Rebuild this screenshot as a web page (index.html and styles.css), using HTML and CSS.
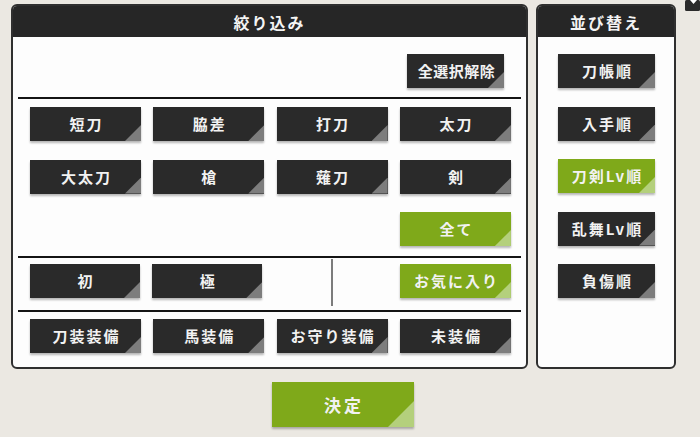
FILE: index.html
```html
<!DOCTYPE html>
<html lang="ja">
<head>
<meta charset="utf-8">
<link rel="stylesheet" href="styles.css">
</head>
<body>
<div class="corner-icon">
  <svg width="15" height="11" viewBox="0 0 15 11"><rect x="0" y="0" width="15" height="11" rx="1.5" fill="#2a2a2a"/><polygon points="5,0 12,0 8.5,4" fill="#ffffff"/></svg>
</div>
<div class="main">
  <section class="panel filter">
    <div class="panel-head">絞り込み</div>
    <div class="sec sec-a">
      <div class="btn btn-narrow tight">全選択解除</div>
    </div>
    <div class="divider"></div>
    <div class="sec sec-b grid">
      <div class="btn">短刀</div>
      <div class="btn">脇差</div>
      <div class="btn">打刀</div>
      <div class="btn">太刀</div>
      <div class="btn">大太刀</div>
      <div class="btn">槍</div>
      <div class="btn">薙刀</div>
      <div class="btn">剣</div>
      <div class="btn green col4">全て</div>
    </div>
    <div class="divider"></div>
    <div class="sec sec-c grid">
      <div class="btn w110 push">初</div>
      <div class="btn w110 push">極</div>
      <div class="vline-cell"><div class="vline"></div></div>
      <div class="btn green push">お気に入り</div>
    </div>
    <div class="divider"></div>
    <div class="sec sec-d grid">
      <div class="btn">刀装装備</div>
      <div class="btn">馬装備</div>
      <div class="btn">お守り装備</div>
      <div class="btn">未装備</div>
    </div>
  </section>
  <section class="panel sort">
    <div class="panel-head">並び替え</div>
    <div class="sort-list">
      <div class="btn btn-narrow">刀帳順</div>
      <div class="btn btn-narrow">入手順</div>
      <div class="btn btn-narrow green">刀剣Lv順</div>
      <div class="btn btn-narrow">乱舞Lv順</div>
      <div class="btn btn-narrow">負傷順</div>
    </div>
  </section>
</div>
<div class="footer">
  <div class="btn green decide">決定</div>
</div>
</body>
</html>
```

FILE: styles.css
```css
* { box-sizing: border-box; }
html, body { margin: 0; padding: 0; }
body {
  width: 700px;
  height: 437px;
  overflow: hidden;
  background: #ebe8e2;
  font-family: "Noto Sans CJK JP", "Noto Sans", sans-serif;
  position: relative;
}
.corner-icon {
  position: absolute;
  top: 0;
  left: 685px;
  line-height: 0;
}
.main {
  display: flex;
  gap: 8px;
  padding: 4px 0 0 11px;
}
.panel {
  background: #fdfdfd;
  border: 2px solid #2f2f2f;
  border-radius: 6px;
  overflow: hidden;
  height: 365px;
}
.filter { width: 517px; }
.sort { width: 140px; }
.panel-head {
  background: #262626;
  color: #f4f4f4;
  text-align: center;
  font-size: 16px;
  font-weight: 700;
  letter-spacing: 2px;
  margin-top: -2px;
  padding-top: 4px;
  height: 33px;
  line-height: 29px;
}
.sec { padding-left: 17px; padding-right: 15px; }
.sec-a {
  display: flex;
  justify-content: flex-end;
  padding: 17px 22px 9px 0;
  height: 60px;
}
.divider {
  height: 2px;
  background: #141414;
  margin: 0 5px;
}
.grid {
  display: grid;
  grid-template-columns: repeat(4, 111px);
  column-gap: 12.3px;
  align-items: start;
}
.sec-b {
  padding-top: 8px;
  padding-bottom: 10px;
  row-gap: 18.5px;
  height: 157px;
}
.col4 { grid-column: 4; }
.sec-c {
  padding-top: 1px;
  padding-bottom: 4px;
  height: 52px;
}
.push { margin-top: 5px; }
.w110 { width: 110px; }
.sec-c .w110:nth-child(2) { margin-left: -1px; }
.vline-cell {
  display: flex;
  justify-content: center;
}
.vline {
  width: 2px;
  height: 47px;
  background: #7c7c7c;
}
.sec-d {
  padding-top: 7px;
  padding-bottom: 14px;
}
.btn {
  position: relative;
  height: 34px;
  background: #2a2a2a;
  color: #f2f2f2;
  text-align: center;
  font-size: 15px;
  font-weight: 700;
  line-height: 34px;
  letter-spacing: 2px;
  padding-left: 2px;
  box-shadow: 0 2px 2px rgba(0, 0, 0, 0.28);
  white-space: nowrap;
}
.btn::after {
  content: "";
  position: absolute;
  right: 0;
  bottom: 0;
  width: 16px;
  height: 16px;
  background: #7d7d7d;
  clip-path: polygon(100% 0, 100% 100%, 0 100%);
}
.btn.green { background: #7fa91a; }
.btn.green::after { background: #b4d07c; }
.btn-narrow { width: 97px; }
.tight { letter-spacing: 0.5px; }
.sort-list {
  display: flex;
  flex-direction: column;
  align-items: center;
  row-gap: 18.5px;
  padding-top: 17px;
  padding-left: 1px;
}
.footer {
  padding: 13px 0 0 272px;
}
.decide {
  width: 142px;
  height: 45px;
  line-height: 45px;
  font-size: 17px;
  letter-spacing: 3px;
}
.decide::after {
  width: 26px;
  height: 26px;
}
```
